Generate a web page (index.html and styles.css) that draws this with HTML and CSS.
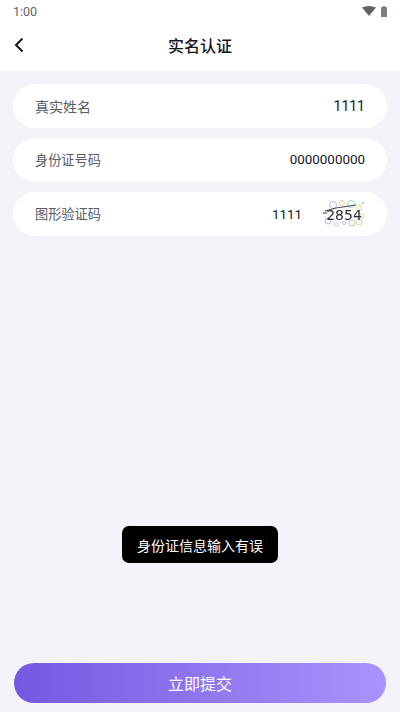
FILE: index.html
```html
<!DOCTYPE html>
<html lang="zh-CN">
<head>
<meta charset="utf-8">
<title>实名认证</title>
<link rel="stylesheet" href="styles.css">
</head>
<body>
<div class="page">
  <header class="top">
    <div class="status">
      <span class="time">1:00</span>
      <span class="status-icons">
        <svg width="14" height="10" viewBox="0 0 14 10"><path d="M0 1.600 Q7 -1.600 14 1.600 L7 10 Z" fill="#5f6368"/></svg>
        <svg width="6" height="11" viewBox="0 0 6 11"><path d="M2 0h2v1h2v10H0V1h2z" fill="#7a7d82"/></svg>
      </span>
    </div>
    <div class="nav">
      <svg class="back" width="10" height="16" viewBox="0 0 10 16"><path d="M8.500 1.500 2 8l6.500 6.500" fill="none" stroke="#15151f" stroke-width="2"/></svg>
      <h1 class="title">实名认证</h1>
    </div>
  </header>
  <main class="form">
    <div class="row"><span class="label">真实姓名</span><span class="value">1111</span></div>
    <div class="row row-compact"><span class="label">身份证号码</span><span class="value">0000000000</span></div>
    <div class="row row-compact">
      <span class="label">图形验证码</span>
      <span class="captcha-wrap">
        <span class="value">1111</span>
        <svg class="captcha" width="44" height="30" viewBox="0 0 44 30">
          <g fill="none" stroke-width="1">
            <circle cx="11" cy="7" r="3.500" stroke="#b9b4ea"/>
            <circle cx="20" cy="5" r="2.500" stroke="#d8d48a"/>
            <circle cx="29" cy="6" r="3.500" stroke="#9fd6c8"/>
            <circle cx="37" cy="10" r="3" stroke="#e6d98a"/>
            <circle cx="6" cy="23" r="3" stroke="#c5b0e6"/>
            <circle cx="14" cy="26" r="2" stroke="#e8b8c8"/>
            <circle cx="30" cy="25" r="3" stroke="#a8d8c0"/>
            <circle cx="37" cy="24" r="3" stroke="#e6d490"/>
            <circle cx="22" cy="25" r="1.500" stroke="#b4cbe8"/>
            <circle cx="40" cy="18" r="2" stroke="#c8e0a0"/>
          </g>
          <circle cx="41" cy="5" r="1" fill="#7cc7a0"/>
          <text class="captcha-text" x="22" y="22" text-anchor="middle">2854</text>
          <path d="M3 13 14 10 34 7" fill="none" stroke="#4a4a5a" stroke-width="1.200"/>
          <path d="M1 15h4" stroke="#777785" stroke-width="1.500"/>
        </svg>
      </span>
    </div>
  </main>
  <div class="toast">身份证信息输入有误</div>
  <div class="submit-wrap"><button class="submit">立即提交</button></div>
</div>
</body>
</html>
```
FILE: styles.css
```css
* { box-sizing: border-box; }
html, body { margin: 0; padding: 0; }
body {
  width: 400px;
  height: 712px;
  overflow: hidden;
  font-family: Roboto, "Noto Sans CJK SC", sans-serif;
  background: #f3f3f9;
}
.page {
  height: 712px;
  display: flex;
  flex-direction: column;
  position: relative;
}
.top { height: 71px; background: #fff; flex: none; }
.status {
  height: 22px;
  padding: 0 13px;
  display: flex;
  justify-content: space-between;
  align-items: center;
}
.time { font-size: 12.500px; color: #5f6368; }
.status-icons { display: flex; align-items: center; gap: 5px; }
.nav {
  height: 49px;
  display: flex;
  align-items: center;
  justify-content: center;
  position: relative;
}
.back { position: absolute; left: 14px; top: 15px; }
.title { margin: 0; font-size: 16px; font-weight: 500; color: #15151f; line-height: 1; }
.form {
  flex: none;
  padding: 13px 13px 0;
  display: flex;
  flex-direction: column;
  gap: 10px;
}
.row {
  height: 44px;
  border-radius: 22px;
  background: #fff;
  padding: 0 22px;
  display: flex;
  align-items: center;
  justify-content: space-between;
}
.label { font-size: 14px; color: #5a5c66; }
.value { font-size: 14px; color: #15151f; }
.row-compact { padding-bottom: 2px; }
.row-compact .label { font-size: 13.200px; }
.row-compact .value { font-size: 13.400px; }
.captcha-wrap { display: flex; align-items: center; gap: 20px; margin: 2px -1px 0 0; }
.captcha { display: block; margin-bottom: 2px; filter: blur(0.3px); }
.captcha-text {
  font-family: "DejaVu Sans", sans-serif;
  font-size: 14px;
  fill: #2a2a36;
}
.toast {
  position: absolute;
  left: 122px;
  top: 526px;
  width: 156px;
  height: 37px;
  background: #000;
  color: #fff;
  border-radius: 7px;
  font-size: 14px;
  display: flex;
  align-items: center;
  justify-content: center;
}
.submit-wrap { flex: none; margin-top: auto; padding: 0 14px 9px; }
.submit {
  display: block;
  width: 100%;
  height: 40px;
  border: 0;
  border-radius: 20px;
  background: linear-gradient(90deg, #7558e2, #aa93fd);
  color: #fff;
  font-family: inherit;
  font-size: 16px;
}
```
